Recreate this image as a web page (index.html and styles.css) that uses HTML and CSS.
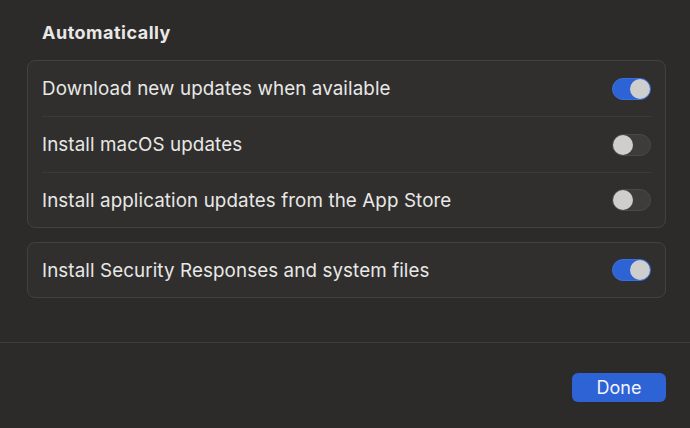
FILE: index.html
```html
<!DOCTYPE html>
<html lang="en">
<head>
  <meta charset="UTF-8">
  <meta name="viewport" content="width=device-width, initial-scale=1.0">
  <title>Automatic Updates</title>
  <link rel="stylesheet" href="styles.css">
</head>
<body>
  <div class="sheet">
    <div class="content">
      <h3>Automatically</h3>
      <div class="group">
        <div class="row">
          <span>Download new updates when available</span>
          <span class="switch on"></span>
        </div>
        <div class="row">
          <span>Install macOS updates</span>
          <span class="switch"></span>
        </div>
        <div class="row">
          <span>Install application updates from the App Store</span>
          <span class="switch"></span>
        </div>
      </div>
      <div class="group">
        <div class="row">
          <span>Install Security Responses and system files</span>
          <span class="switch on"></span>
        </div>
      </div>
    </div>
    <div class="footer">
      <button class="done">Done</button>
    </div>
  </div>
</body>
</html>
```

FILE: styles.css
```css
:root {
  --background: #2c2b29;
  --surface: #302f2d;
  --border: #42413f;
  --divider: #3b3a38;
  --text: #e8e8e7;
  --blue: #2e63d6;
  --knob: #cececd;
}

body {
  margin: 0;
  background: var(--background);
  color: var(--text);
  font-family: 'Inter', 'Helvetica Neue', sans-serif;
  width: 690px;
  height: 428px;
  overflow: hidden;
}

.sheet {
  display: flex;
  flex-direction: column;
  height: 100%;
}

.content {
  padding: 20px 24px 0 27px;
  height: 322px;
}

h3 {
  margin: 0 0 14px 15px;
  font-size: 18px;
  font-weight: 700;
  letter-spacing: 0.5px;
  line-height: 26px;
}

.group {
  background: var(--surface);
  border: 1px solid var(--border);
  border-radius: 8px;
  padding: 0 14px;
  margin-bottom: 14px;
}

.row {
  display: flex;
  align-items: center;
  justify-content: space-between;
  height: 55px;
  font-size: 18.8px;
  letter-spacing: 0.1px;
  border-bottom: 1px solid var(--divider);
}

.row:last-child {
  border-bottom: none;
  height: 54px;
}

.switch {
  position: relative;
  width: 37px;
  height: 20px;
  border-radius: 11px;
  background: #3d3c3a;
  border: 1px solid #4a4947;
}

.switch::after {
  content: '';
  position: absolute;
  top: 0;
  left: 0;
  width: 20px;
  height: 20px;
  border-radius: 50%;
  background: var(--knob);
}

.switch.on {
  background: var(--blue);
  border-color: #3a6fe0;
}

.switch.on::after {
  left: 17px;
}

.footer {
  border-top: 1px solid #3e3d3b;
  display: flex;
  justify-content: flex-end;
  padding: 30px 24px 0 0;
  flex: 1;
}

.done {
  width: 94px;
  height: 29px;
  border: none;
  border-radius: 6px;
  background: var(--blue);
  color: #f2f5fc;
  font-family: inherit;
  font-size: 18px;
  padding: 0;
}
```
